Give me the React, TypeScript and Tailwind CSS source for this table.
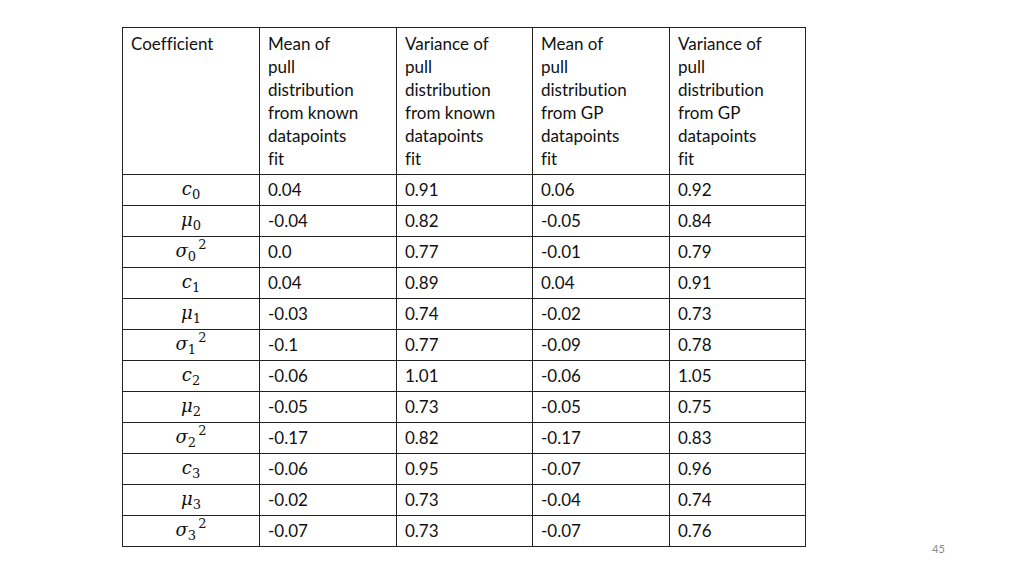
import React from "react";

type Row = { sym: string; sub: string; sq?: boolean; v: string[] };

const rows: Row[] = [
  { sym: "c", sub: "0", v: ["0.04", "0.91", "0.06", "0.92"] },
  { sym: "μ", sub: "0", v: ["-0.04", "0.82", "-0.05", "0.84"] },
  { sym: "σ", sub: "0", sq: true, v: ["0.0", "0.77", "-0.01", "0.79"] },
  { sym: "c", sub: "1", v: ["0.04", "0.89", "0.04", "0.91"] },
  { sym: "μ", sub: "1", v: ["-0.03", "0.74", "-0.02", "0.73"] },
  { sym: "σ", sub: "1", sq: true, v: ["-0.1", "0.77", "-0.09", "0.78"] },
  { sym: "c", sub: "2", v: ["-0.06", "1.01", "-0.06", "1.05"] },
  { sym: "μ", sub: "2", v: ["-0.05", "0.73", "-0.05", "0.75"] },
  { sym: "σ", sub: "2", sq: true, v: ["-0.17", "0.82", "-0.17", "0.83"] },
  { sym: "c", sub: "3", v: ["-0.06", "0.95", "-0.07", "0.96"] },
  { sym: "μ", sub: "3", v: ["-0.02", "0.73", "-0.04", "0.74"] },
  { sym: "σ", sub: "3", sq: true, v: ["-0.07", "0.73", "-0.07", "0.76"] },
];

const headers = [
  ["Coefficient"],
  ["Mean of", "pull", "distribution", "from known", "datapoints", "fit"],
  ["Variance of", "pull", "distribution", "from known", "datapoints", "fit"],
  ["Mean of", "pull", "distribution", "from GP", "datapoints", "fit"],
  ["Variance of", "pull", "distribution", "from GP", "datapoints", "fit"],
];

const widths = ["w-[137px]", "w-[137px]", "w-[136px]", "w-[137px]", "w-[136px]"];

export default function App() {
  return (
    <div
      className="w-[1024px] h-[576px] bg-white overflow-hidden flex items-end pl-[122px] pt-[27px] pb-[20px] [font-variant-ligatures:none]"
      style={{ fontFamily: "Lato, sans-serif" }}
    >
      <table className="self-start border-collapse text-[17px] text-[#111]">
        <thead>
          <tr className="h-[147px]">
            {headers.map((h, i) => (
              <th key={i} className={`${widths[i]} border border-[#222] align-top text-left font-normal pl-[8px] pt-[4px] leading-[23px]`}>
                {h.map((l, j) => (
                  <div key={j}>{l}</div>
                ))}
              </th>
            ))}
          </tr>
        </thead>
        <tbody>
          {rows.map((r, i) => (
            <tr key={i} className="h-[31px]">
              <td className="border border-[#222] text-center align-middle pb-[2px] leading-[20px]">
                <span className="inline-block h-[20px] text-[18px] italic leading-[20px]" style={{ fontFamily: "'DejaVu Serif', serif" }}>
                  {r.sym}
                  <span className="not-italic text-[13px] leading-[0] align-[-4px]">{r.sub}</span>
                  {r.sq && <span className="not-italic text-[13px] leading-[0] align-[8px] ml-[2px]">2</span>}
                </span>
              </td>
              {r.v.map((v, j) => (
                <td key={j} className="border border-[#222] pl-[8px] align-middle leading-[20px] pb-[1px]">
                  {v}
                </td>
              ))}
            </tr>
          ))}
        </tbody>
      </table>
      <div className="ml-[126px] text-[11px] leading-[14px] text-[#8a8a8a]">45</div>
    </div>
  );
}
